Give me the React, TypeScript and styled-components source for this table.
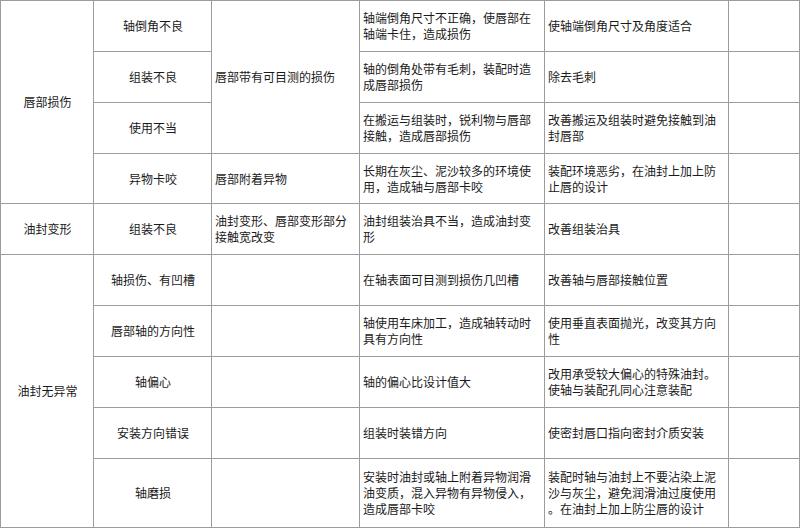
import React from 'react';
import styled, { createGlobalStyle } from 'styled-components';

const Global = createGlobalStyle`
  html, body { margin: 0; padding: 0; background: #ffffff; }
  body { font-family: "Noto Sans CJK SC", "Noto Sans", sans-serif; }
`;

const Table = styled.table`
  width: 800px;
  border-collapse: collapse;
  table-layout: fixed;
  font-size: 12px;
  line-height: 16px;
  color: #1a1a1a;
`;

const Col = styled.col<{ $w: number }>`
  width: ${p => p.$w}px;
`;

const Row = styled.tr<{ $h: number }>`
  height: ${p => p.$h}px;
`;

const Cell = styled.td<{ $center?: boolean }>`
  border: 1px solid #9c9c9c;
  padding: 0 2px 0 3px;
  vertical-align: middle;
  text-align: ${p => (p.$center ? 'center' : 'left')};
  white-space: nowrap;
  overflow: hidden;
`;

type C = { text?: string[]; center?: boolean; rowSpan?: number };
const t = (...lines: string[]): C => ({ text: lines });
const c = (s: string, rowSpan?: number): C => ({ text: [s], center: true, rowSpan });
const e: C = { text: [] };

const rows: { h: number; cells: C[] }[] = [
  {
    h: 51,
    cells: [
      c('唇部损伤', 4),
      c('轴倒角不良'),
      { text: ['唇部带有可目测的损伤'], rowSpan: 3 },
      t('轴端倒角尺寸不正确，使唇部在', '轴端卡住，造成损伤'),
      t('使轴端倒角尺寸及角度适合'),
      e,
    ],
  },
  {
    h: 51,
    cells: [c('组装不良'), t('轴的倒角处带有毛刺，装配时造', '成唇部损伤'), t('除去毛刺'), e],
  },
  {
    h: 51,
    cells: [
      c('使用不当'),
      t('在搬运与组装时，锐利物与唇部', '接触，造成唇部损伤'),
      t('改善搬运及组装时避免接触到油', '封唇部'),
      e,
    ],
  },
  {
    h: 50,
    cells: [
      c('异物卡咬'),
      t('唇部附着异物'),
      t('长期在灰尘、泥沙较多的环境使', '用，造成轴与唇部卡咬'),
      t('装配环境恶劣，在油封上加上防', '止唇的设计'),
      e,
    ],
  },
  {
    h: 51,
    cells: [
      c('油封变形'),
      c('组装不良'),
      t('油封变形、唇部变形部分', '接触宽改变'),
      t('油封组装治具不当，造成油封变', '形'),
      t('改善组装治具'),
      e,
    ],
  },
  {
    h: 51,
    cells: [
      c('油封无异常', 5),
      c('轴损伤、有凹槽'),
      e,
      t('在轴表面可目测到损伤几凹槽'),
      t('改善轴与唇部接触位置'),
      e,
    ],
  },
  {
    h: 51,
    cells: [
      c('唇部轴的方向性'),
      e,
      t('轴使用车床加工，造成轴转动时', '具有方向性'),
      t('使用垂直表面抛光，改变其方向', '性'),
      e,
    ],
  },
  {
    h: 51,
    cells: [
      c('轴偏心'),
      e,
      t('轴的偏心比设计值大'),
      t('改用承受较大偏心的特殊油封。', '使轴与装配孔同心注意装配'),
      e,
    ],
  },
  {
    h: 51,
    cells: [c('安装方向错误'), e, t('组装时装错方向'), t('使密封唇口指向密封介质安装'), e],
  },
  {
    h: 69,
    cells: [
      c('轴磨损'),
      e,
      t('安装时油封或轴上附着异物润滑', '油变质，混入异物有异物侵入，', '造成唇部卡咬'),
      t('装配时轴与油封上不要沾染上泥', '沙与灰尘，避免润滑油过度使用', '。在油封上加上防尘唇的设计'),
      e,
    ],
  },
];

const widths = [93, 118, 148, 185, 184, 71];

export default function App() {
  return (
    <>
      <Global />
      <Table>
        <colgroup>
          {widths.map((w, i) => (
            <Col key={i} $w={w} />
          ))}
        </colgroup>
        <tbody>
          {rows.map((r, ri) => (
            <Row key={ri} $h={r.h}>
              {r.cells.map((cell, ci) => (
                <Cell key={ci} $center={cell.center} rowSpan={cell.rowSpan}>
                  {(cell.text || []).map((l, li) => (
                    <React.Fragment key={li}>
                      {li > 0 && <br />}
                      {l}
                    </React.Fragment>
                  ))}
                </Cell>
              ))}
            </Row>
          ))}
        </tbody>
      </Table>
    </>
  );
}
